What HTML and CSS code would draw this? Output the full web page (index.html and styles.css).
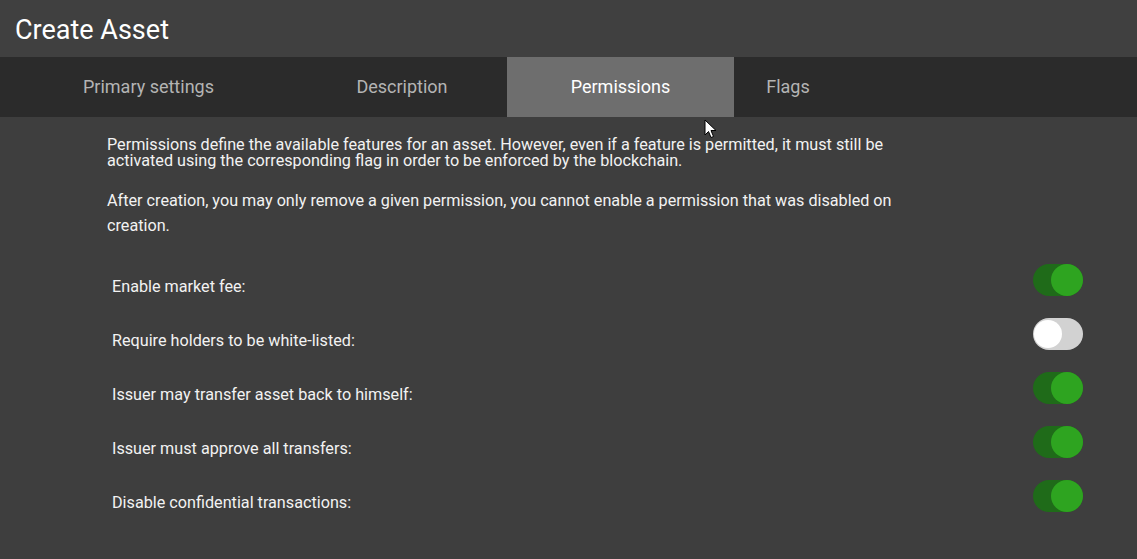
FILE: index.html
```html
<!DOCTYPE html>
<html>
<head>
  <title>Create Asset</title>
  <link rel="stylesheet" href="styles.css">
</head>
<body>
  <header class="page-header">
    <h1>Create Asset</h1>
  </header>
  <nav class="tabs">
    <a class="tab tab-primary" href="#">Primary settings</a>
    <a class="tab tab-description" href="#">Description</a>
    <a class="tab tab-permissions active" href="#">Permissions</a>
    <a class="tab tab-flags" href="#">Flags</a>
  </nav>
  <main class="content">
    <p class="intro">Permissions define the available features for an asset. However, even if a feature is permitted, it must still be activated using the corresponding flag in order to be enforced by the blockchain.</p>
    <p class="note">After creation, you may only remove a given permission, you cannot enable a permission that was disabled on creation.</p>
    <ul class="perm-list">
      <li class="perm-row">
        <span class="perm-label">Enable market fee:</span>
        <label class="switch"><input type="checkbox" checked><span class="slider"></span></label>
      </li>
      <li class="perm-row">
        <span class="perm-label">Require holders to be white-listed:</span>
        <label class="switch"><input type="checkbox"><span class="slider"></span></label>
      </li>
      <li class="perm-row">
        <span class="perm-label">Issuer may transfer asset back to himself:</span>
        <label class="switch"><input type="checkbox" checked><span class="slider"></span></label>
      </li>
      <li class="perm-row">
        <span class="perm-label">Issuer must approve all transfers:</span>
        <label class="switch"><input type="checkbox" checked><span class="slider"></span></label>
      </li>
      <li class="perm-row">
        <span class="perm-label">Disable confidential transactions:</span>
        <label class="switch"><input type="checkbox" checked><span class="slider"></span></label>
      </li>
    </ul>
  </main>
  <!-- mouse pointer from the screenshot -->
  <svg class="pointer" width="14" height="20" viewBox="0 0 14 20">
    <path d="M1 1 L1 16 L4.5 12.5 L7 18.5 L9.5 17.5 L7 11.5 L12 11.5 Z" fill="#fff" stroke="#000" stroke-width="1"/>
  </svg>
</body>
</html>
```

FILE: styles.css
```css
body {
  font-family: Roboto, "Liberation Sans", Arial, sans-serif;
  background-color: #3e3e3e;
  color: #f2f2f2;
  margin: 0;
  height: 100vh;
  overflow: hidden;
}

.page-header {
  background-color: #404040;
  height: 57px;
  display: flex;
  align-items: center;
  padding: 0 15px;
}

.page-header h1 {
  margin: 2px 0 0;
  font-size: 27px;
  font-weight: 400;
  color: #fff;
}

.tabs {
  display: flex;
  height: 60px;
  background-color: #2b2b2b;
}

.tab {
  display: flex;
  align-items: center;
  justify-content: center;
  padding-bottom: 1px;
  font-size: 18px;
  color: #b4b4b4;
  text-decoration: none;
}

.tab-primary { width: 297px; }
.tab-description { width: 210px; }
.tab-permissions { width: 227px; }
.tab-flags { width: 108px; }

.tab.active {
  background-color: #6e6e6e;
  color: #fff;
}

.content {
  padding: 20px 54px 0 107px;
}

.intro {
  margin: 0;
  max-width: 800px;
  font-size: 16.2px;
  line-height: 16px;
}

.note {
  margin: 19px 0 0;
  max-width: 800px;
  font-size: 16.2px;
  line-height: 25px;
}

.perm-list {
  list-style: none;
  margin: 15px 0 0;
  padding: 0 0 0 5px;
}

.perm-row {
  display: flex;
  align-items: center;
  justify-content: space-between;
  padding: 11px 0;
}

.perm-label {
  font-size: 16.2px;
  margin-top: 12px;
}

/* toggle switch */
.switch {
  position: relative;
  width: 50px;
  height: 32px;
}

.switch input {
  display: none;
}

.slider {
  position: absolute;
  top: 0;
  left: 0;
  right: 0;
  bottom: 0;
  border-radius: 16px;
  background-color: #d2d2d2;
}

.slider::before {
  content: "";
  position: absolute;
  top: 2px;
  left: 1px;
  width: 28px;
  height: 28px;
  border-radius: 50%;
  background-color: #fff;
}

.switch input:checked + .slider {
  background-color: #1f6b19;
}

.switch input:checked + .slider::before {
  top: 0;
  left: 18px;
  width: 32px;
  height: 32px;
  background-color: #2ea420;
}

.pointer {
  position: absolute;
  left: 704px;
  top: 119px;
}
```
